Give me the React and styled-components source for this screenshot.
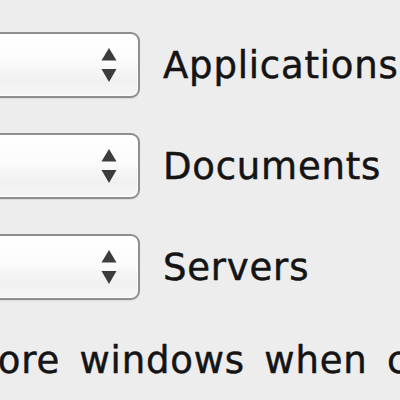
import React from "react";
import styled, { createGlobalStyle } from "styled-components";

const Global = createGlobalStyle`
  html, body { margin: 0; padding: 0; background: #ededed; overflow: hidden; }
  body { width: 400px; height: 400px; }
`;

const Page = styled.div`
  width: 400px;
  height: 400px;
  overflow: hidden;
  padding-top: 32px;
  box-sizing: border-box;
  font-family: "DejaVu Sans", "Liberation Sans", sans-serif;
  color: #141414;
`;

const Row = styled.div`
  display: flex;
  align-items: center;
  gap: 23px;
  height: 66px;
  margin-bottom: 35px;
  white-space: nowrap;
`;

const Select = styled.div`
  flex: none;
  width: 200px;
  height: 66px;
  margin-left: -60px;
  box-sizing: border-box;
  border: 2px solid #8e8e8e;
  border-radius: 9px;
  background: linear-gradient(#ffffff 0%, #fbfbfb 45%, #f0f0f0 75%, #f6f6f6 100%);
  box-shadow: inset 0 0 0 1px #fdfdfd, 0 1px 1px rgba(0,0,0,0.08);
  display: flex;
  align-items: center;
  justify-content: flex-end;
  padding-right: 21px;
`;

const Label = styled.span`
  font-size: 37px;
  letter-spacing: 0.8px;
  line-height: 1;
  -webkit-text-stroke: 0.5px #141414;
`;

const Check = styled.div`
  margin-top: 42px;
  margin-left: -86px;
  font-size: 37px;
  letter-spacing: 0.8px;
  word-spacing: 7px;
  white-space: nowrap;
  line-height: 1;
  -webkit-text-stroke: 0.5px #141414;
`;

const Arrows = () => (
  <svg width="16" height="36" viewBox="0 0 16 36">
    <polygon points="8,1 15.5,13.5 0.5,13.5" fill="#3c3c3c" />
    <polygon points="0.5,22 15.5,22 8,35" fill="#3c3c3c" />
  </svg>
);

export default function App() {
  return (
    <Page>
      <Global />
      <Row>
        <Select><Arrows /></Select>
        <Label>Applications</Label>
      </Row>
      <Row>
        <Select><Arrows /></Select>
        <Label>Documents</Label>
      </Row>
      <Row>
        <Select><Arrows /></Select>
        <Label>Servers</Label>
      </Row>
      <Check>Restore windows when closing and re-opening apps</Check>
    </Page>
  );
}
